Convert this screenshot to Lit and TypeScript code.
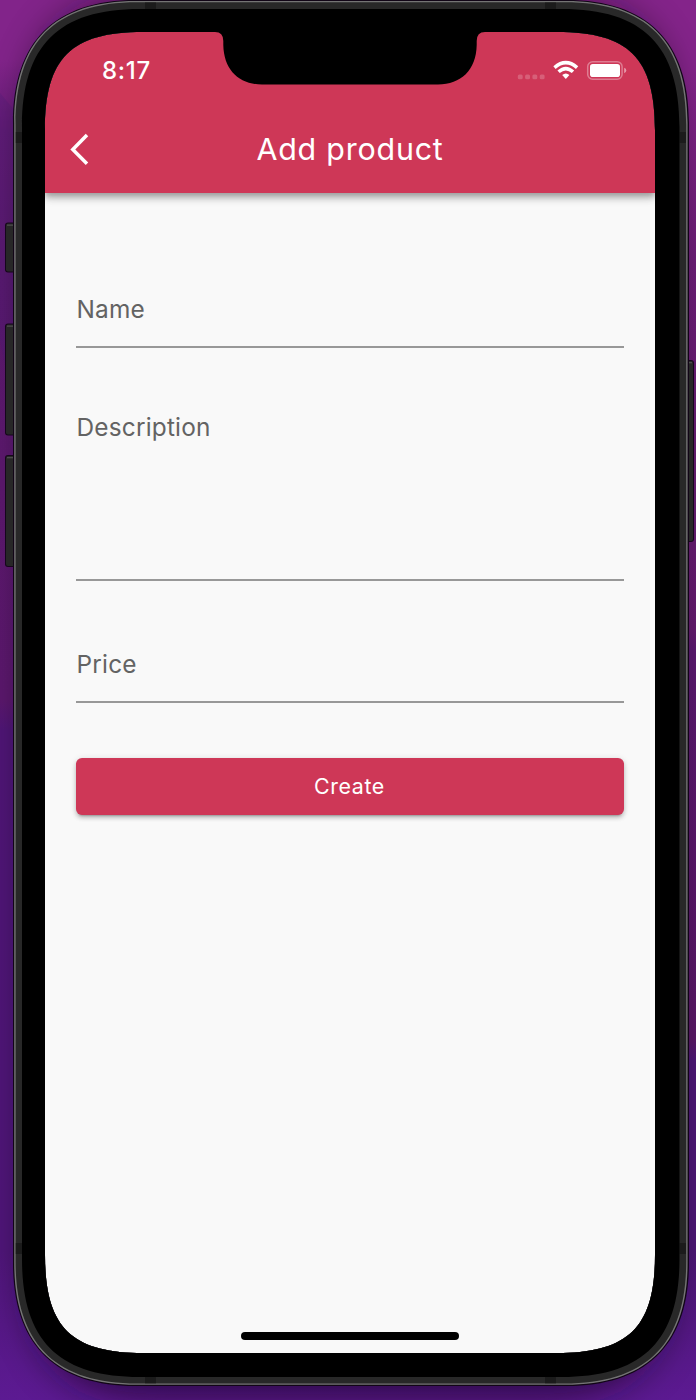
import { LitElement, html, css, svg } from "lit";
import { customElement, property } from "lit/decorators.js";

/** Closed path of a rectangle whose corners ease in over `a` px, with handles `c` px from the corner. */
function squircle(x: number, y: number, w: number, h: number, a: number, c: number): string {
  const R = x + w, B = y + h;
  return [
    `M${x + a} ${y}L${R - a} ${y}`,
    `C${R - c} ${y} ${R} ${y + c} ${R} ${y + a}L${R} ${B - a}`,
    `C${R} ${B - c} ${R - c} ${B} ${R - a} ${B}L${x + a} ${B}`,
    `C${x + c} ${B} ${x} ${B - c} ${x} ${B - a}L${x} ${y + a}`,
    `C${x} ${y + c} ${x + c} ${y} ${x + a} ${y}Z`,
  ].join("");
}

const SCREEN = squircle(45, 32, 610, 1321, 98, 26);
const GLASS = squircle(22, 9, 657.5, 1368, 118, 36.5);
const FRAME = squircle(15.6, 2.3, 670.6, 1381.2, 122, 39.6);
const EDGE = squircle(14.2, 1, 673.4, 1383.8, 122, 40.6);
const RIM = squircle(13, 0, 676, 1386, 123, 41.6);

/** Side buttons: x, y, width, height. */
const BUTTONS = [
  [6, 223.5, 12, 48],
  [6, 324.5, 12, 110],
  [6, 456, 12, 110],
  [682, 361, 11, 180],
];

/** Antenna bands in the metal frame. */
const BANDS = [
  [145, 2.5, 11, 6.5],
  [545, 2.5, 11, 6.5],
  [145, 1377, 11, 6.3],
  [545, 1377, 11, 6.3],
  [15.8, 132, 6.2, 11],
  [15.8, 1243, 6.2, 11],
  [679.6, 132, 6.4, 11],
  [679.6, 1243, 6.4, 11],
];

@customElement("form-field")
export class FormField extends LitElement {
  @property() label = "";

  static styles = css`
    :host {
      display: block;
      box-sizing: border-box;
      border-bottom: 2px solid #989898;
      color: #636363;
      font-size: 24.4px;
      line-height: 30px;
      letter-spacing: 0.2px;
      text-indent: 0.5px;
    }
  `;

  render() {
    return html`${this.label}`;
  }
}

@customElement("app-root")
export class AppRoot extends LitElement {
  static styles = css`
    :host {
      display: block;
      position: relative;
      box-sizing: border-box;
      width: 696px;
      height: 1400px;
      overflow: hidden;
      padding: 32px 41px 47px 45px;
      background:
        linear-gradient(180deg, #84248a 0, #84248a 70px, #6d1e78 260px, #641a6e 630px, #5b1870 650px, #591766 1040px, #4d1676 1060px, #4d1676 1250px, #5c1a92 1400px) right / 348px 100% no-repeat,
        linear-gradient(180deg, #82248a 0, #82248a 60px, #661c78 130px, #5e1a70 260px, #5c186e 700px, #501677 730px, #50167a 1250px, #5c1a92 1400px);
      font-family: Inter, "Liberation Sans", sans-serif;
    }
    .layer {
      position: absolute;
      inset: 0;
      display: block;
    }
    .screen {
      position: relative;
      display: flex;
      flex-direction: column;
      height: 1321px;
      background: #f9f9f9;
    }
    .top {
      box-sizing: border-box;
      height: 161px;
      background: #ce3757;
      color: #fff;
      box-shadow: 0 3px 6px rgba(0, 0, 0, 0.24), 0 6px 8px rgba(0, 0, 0, 0.14), 0 1px 12px rgba(0, 0, 0, 0.1);
    }
    .status {
      display: flex;
      align-items: center;
      justify-content: space-between;
      height: 74px;
      padding: 4px 28px 0 57px;
      box-sizing: border-box;
    }
    .time {
      font-size: 24px;
      font-weight: 540;
      line-height: 30px;
      letter-spacing: 0.7px;
    }
    .bar {
      display: grid;
      grid-template-columns: 70px 1fr 70px;
      align-items: center;
      height: 85px;
    }
    .back {
      display: block;
      margin-left: 22px;
    }
    .title {
      text-align: center;
      font-size: 30.4px;
      line-height: 38px;
      letter-spacing: 0.8px;
    }
    .form {
      display: flex;
      flex-direction: column;
      padding: 101px 31px 0;
    }
    .name {
      height: 54px;
    }
    .description {
      height: 169px;
      margin-top: 64px;
    }
    .price {
      height: 54px;
      margin-top: 68px;
    }
    .create {
      height: 57px;
      margin: 55px 0 0;
      padding: 0 1px 2px 0;
      border: 0;
      border-radius: 6px;
      background: #ce3757;
      color: #fff;
      font: 400 21.4px/54px Inter, "Liberation Sans", sans-serif;
      letter-spacing: 0.6px;
      box-shadow: 0 4px 2px -3px rgba(0, 0, 0, 0.2), 0 3px 4px rgba(0, 0, 0, 0.18), 0 1px 7px rgba(0, 0, 0, 0.12);
    }
    .home {
      width: 218px;
      height: 8px;
      margin: auto auto 13px;
      border-radius: 4px;
      background: #000;
    }
  `;

  private backdrop() {
    return html`<svg class="layer" width="696" height="1400" viewBox="0 0 696 1400">
      <defs>
        <filter id="soft" x="-20%" y="-20%" width="140%" height="140%"><feGaussianBlur stdDeviation="20" /></filter>
      </defs>
      <path d="M0 93L16 112V420L0 340Z" fill="#4c1a78" opacity=".25" />
      <path d=${squircle(30, 2, 640, 1392, 122, 40)} fill="#12051c" opacity=".72" filter="url(#soft)" />
    </svg>`;
  }

  private device() {
    return html`<svg class="layer" width="696" height="1400" viewBox="0 0 696 1400">
      <defs>
        <clipPath id="outside"><path clip-rule="evenodd" d=${"M0 0H696V1400H0Z" + FRAME} /></clipPath>
      </defs>
      <g clip-path="url(#outside)">
        ${BUTTONS.map(
          ([x, y, w, h]) => svg`
            <rect x=${x - 1} y=${y - 1} width=${w + 2} height=${h + 2} rx="3" fill="#16061c" />
            <rect x=${x} y=${y} width=${w} height=${h} rx="2" fill="#272727" />
            <rect x=${x + 1} y=${y + 1} width=${w - 2} height="1.3" fill="#4c4c4c" />`
        )}
      </g>
      <path fill="#110516" fill-rule="evenodd" d=${RIM + SCREEN} />
      <path fill="#747474" fill-rule="evenodd" d=${EDGE + SCREEN} />
      <path fill="#282828" fill-rule="evenodd" d=${FRAME + SCREEN} />
      ${BANDS.map(([x, y, w, h]) => svg`<rect x=${x} y=${y} width=${w} height=${h} fill="#1b1b1b" />`)}
      <path fill="#000" fill-rule="evenodd" d=${GLASS + SCREEN} />
      <path
        fill="#000"
        d="M213 31V32H215Q223.3 32 223.3 41V45C223.8 70 239 84.5 262 84.5H438C461 84.5 476.2 70 476.7 45V41Q476.7 32 485 32H487V31Z"
      />
    </svg>`;
  }

  render() {
    return html`
      ${this.backdrop()}
      <main class="screen">
        <header class="top">
          <div class="status">
            <span class="time">8:17</span>
            <svg width="110" height="24" viewBox="0 0 110 24">
              <g fill="#fff" fill-opacity=".2">
                <rect x="0.8" y="15.4" width="4.9" height="4.9" rx="1.5" />
                <rect x="8.1" y="15.4" width="4.9" height="4.9" rx="1.5" />
                <rect x="15.4" y="15.4" width="4.9" height="4.9" rx="1.5" />
                <rect x="22.7" y="15.4" width="4.9" height="4.9" rx="1.5" />
              </g>
              <g fill="none" stroke="#fff" stroke-width="3.5">
                <path d="M37.5 8.6Q48.8 -1.3 60.1 8.6" />
                <path d="M41.6 12.8Q48.8 6.3 56 12.8" />
              </g>
              <path fill="#fff" d="M45.2 16.1Q48.8 12.8 52.4 16.1L48.8 20.1Z" />
              <rect x="70.7" y="2.8" width="34.4" height="17.4" rx="5" fill="none" stroke="#fff" stroke-opacity=".35" stroke-width="1.5" />
              <rect x="73" y="5" width="30" height="13" rx="2.8" fill="#fff" />
              <path fill="#fff" fill-opacity=".5" d="M107.2 8.8Q109.3 9.6 109.3 11.5T107.2 14.2Z" />
            </svg>
          </div>
          <div class="bar">
            <svg class="back" width="30" height="40" viewBox="0 0 30 40">
              <path d="M20 6L5.8 20.4L20 34.8" fill="none" stroke="#fff" stroke-width="3.5" />
            </svg>
            <span class="title">Add product</span>
          </div>
        </header>
        <section class="form">
          <form-field class="name" label="Name"></form-field>
          <form-field class="description" label="Description"></form-field>
          <form-field class="price" label="Price"></form-field>
          <button class="create">Create</button>
        </section>
        <div class="home"></div>
      </main>
      ${this.device()}
    `;
  }
}
